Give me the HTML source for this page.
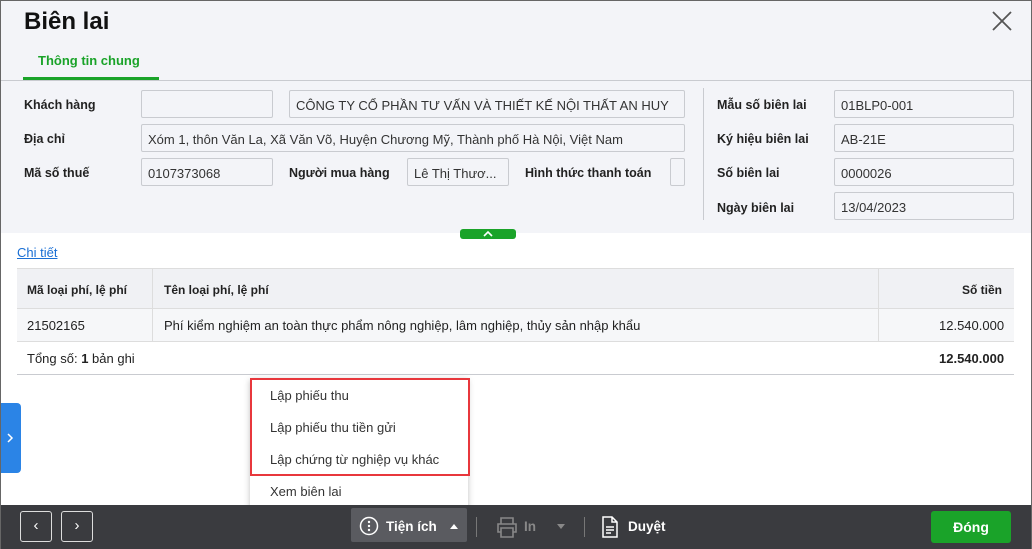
<!DOCTYPE html>
<html><head><meta charset="utf-8"><style>
*{box-sizing:border-box;margin:0;padding:0}
body{width:1032px;height:549px;overflow:hidden;font-family:"Liberation Sans","DejaVu Sans",sans-serif;font-size:13px;color:#222;background:#fff;position:relative}
.frame{position:absolute;inset:0;border:1px solid #666;border-bottom:none}
.top{position:absolute;left:1px;top:1px;right:1px;height:232px;background:#f3f4f8}
.a{position:absolute}
.lbl{position:absolute;font-weight:bold;font-size:12.5px;color:#222}
.inp{position:absolute;height:28px;border:1px solid #c9cbd0;border-radius:2px;background:#f3f4f8;font-size:13px;color:#333;padding:7px 6px;white-space:nowrap;overflow:hidden}
.foot{position:absolute;left:0;top:505px;width:1032px;height:44px;background:#3a3b3f}
.nb{position:absolute;top:6px;width:32px;height:31px;border:1px solid #ddd;border-radius:3px;color:#fff;text-align:center;line-height:28px;font-size:15px}
.mi{position:absolute;left:270px;font-size:13px;color:#333}
</style></head><body>
<div class="top"></div>
<div class="a" style="left:24px;top:8px;font-size:24px;font-weight:bold;color:#111">Biên lai</div>
<svg class="a" style="left:991px;top:10px" width="22" height="22"><path d="M2 2L20 20M20 2L2 20" stroke="#555" stroke-width="1.8"/></svg>
<div class="a" style="left:38px;top:53px;font-size:13px;font-weight:bold;color:#1aa329">Thông tin chung</div>
<div class="a" style="left:23px;top:77px;width:136px;height:3px;background:#1aa329"></div>
<div class="a" style="left:1px;top:80px;width:1030px;height:1px;background:#c9cbd0"></div>

<div class="lbl" style="left:24px;top:98px">Khách hàng</div>
<div class="inp" style="left:141px;top:90px;width:132px"></div>
<div class="inp" style="left:289px;top:90px;width:396px">CÔNG TY CỔ PHẦN TƯ VẤN VÀ THIẾT KẾ NỘI THẤT AN HUY</div>
<div class="lbl" style="left:24px;top:132px">Địa chỉ</div>
<div class="inp" style="left:141px;top:124px;width:544px">Xóm 1, thôn Văn La, Xã Văn Võ, Huyện Chương Mỹ, Thành phố Hà Nội, Việt Nam</div>
<div class="lbl" style="left:24px;top:166px">Mã số thuế</div>
<div class="inp" style="left:141px;top:158px;width:132px">0107373068</div>
<div class="lbl" style="left:289px;top:166px">Người mua hàng</div>
<div class="inp" style="left:407px;top:158px;width:102px">Lê Thị Thươ...</div>
<div class="lbl" style="left:525px;top:166px">Hình thức thanh toán</div>
<div class="inp" style="left:670px;top:158px;width:15px"></div>
<div class="a" style="left:703px;top:88px;width:1px;height:132px;background:#c9cbd0"></div>
<div class="lbl" style="left:717px;top:98px">Mẫu số biên lai</div>
<div class="inp" style="left:834px;top:90px;width:180px">01BLP0-001</div>
<div class="lbl" style="left:717px;top:132px">Ký hiệu biên lai</div>
<div class="inp" style="left:834px;top:124px;width:180px">AB-21E</div>
<div class="lbl" style="left:717px;top:166px">Số biên lai</div>
<div class="inp" style="left:834px;top:158px;width:180px">0000026</div>
<div class="lbl" style="left:717px;top:201px">Ngày biên lai</div>
<div class="inp" style="left:834px;top:192px;width:180px">13/04/2023</div>
<div class="a" style="left:460px;top:229px;width:56px;height:10px;background:#1aa329;border-radius:3px"><svg style="position:absolute;left:22px;top:1px" width="12" height="7"><path d="M2 6L6 2L10 6" stroke="#fff" stroke-width="1.6" fill="none"/></svg></div>

<div class="a" style="left:17px;top:245px;color:#1a6fd4;text-decoration:underline;font-size:13px">Chi tiết</div>
<div class="a" style="left:17px;top:268px;width:997px;height:40px;background:#f0f1f4;border-top:1px solid #ddd"></div>
<div class="a" style="left:17px;top:308px;width:997px;height:34px;background:#f6f7f9;border-top:1px solid #ddd;border-bottom:1px solid #ddd"></div>
<div class="a" style="left:152px;top:268px;width:1px;height:74px;background:#ddd"></div>
<div class="a" style="left:878px;top:268px;width:1px;height:74px;background:#ddd"></div>
<div class="a" style="left:17px;top:374px;width:997px;height:1px;background:#c9cbd0"></div>
<div class="lbl" style="left:27px;top:283px;font-size:12px">Mã loại phí, lệ phí</div>
<div class="lbl" style="left:164px;top:283px;font-size:12px">Tên loại phí, lệ phí</div>
<div class="lbl" style="left:962px;top:283px;font-size:12px">Số tiền</div>
<div class="a" style="left:27px;top:318px">21502165</div>
<div class="a" style="left:164px;top:318px">Phí kiểm nghiệm an toàn thực phẩm nông nghiệp, lâm nghiệp, thủy sản nhập khẩu</div>
<div class="a" style="left:939px;top:318px">12.540.000</div>
<div class="a" style="left:27px;top:351px">Tổng số: <b>1</b> bản ghi</div>
<div class="a" style="left:939px;top:351px;font-weight:bold">12.540.000</div>

<div class="a" style="left:0;top:403px;width:21px;height:70px;background:#2b84e6;border-radius:0 4px 4px 0"><svg style="position:absolute;left:6px;top:30px" width="8" height="10"><path d="M2 1L6 5L2 9" stroke="#fff" stroke-width="1.5" fill="none"/></svg></div>

<div class="a" style="left:250px;top:378px;width:218px;height:132px;background:#fff;box-shadow:0 2px 6px rgba(0,0,0,.25)"></div>
<div class="a" style="left:250px;top:378px;width:220px;height:98px;border:2px solid #e8373c"></div>
<div class="mi" style="top:388px">Lập phiếu thu</div>
<div class="mi" style="top:420px">Lập phiếu thu tiền gửi</div>
<div class="mi" style="top:452px">Lập chứng từ nghiệp vụ khác</div>
<div class="mi" style="top:484px">Xem biên lai</div>

<div class="foot">
<div class="nb" style="left:20px">‹</div>
<div class="nb" style="left:61px">›</div>
<div class="a" style="left:351px;top:3px;width:116px;height:34px;background:#5a5b60;border-radius:2px"></div>
<svg class="a" style="left:359px;top:11px" width="20" height="20"><circle cx="10" cy="10" r="8.5" stroke="#fff" stroke-width="1.5" fill="none"/><circle cx="10" cy="6" r="1.2" fill="#fff"/><circle cx="10" cy="10" r="1.2" fill="#fff"/><circle cx="10" cy="14" r="1.2" fill="#fff"/></svg>
<div class="a" style="left:386px;top:14px;color:#fff;font-weight:bold;font-size:13.5px">Tiện ích</div>
<svg class="a" style="left:449px;top:18px" width="10" height="7"><path d="M1 6L5 1L9 6Z" fill="#fff"/></svg>
<div class="a" style="left:476px;top:12px;width:1px;height:20px;background:#777"></div>
<svg class="a" style="left:496px;top:11px" width="22" height="22"><path d="M5 8V2h12v6M5 16H2V8h18v8h-3M5 12h12v9H5z" stroke="#888" stroke-width="1.6" fill="none"/></svg>
<div class="a" style="left:524px;top:14px;color:#888;font-weight:bold;font-size:13.5px">In</div>
<svg class="a" style="left:556px;top:18px" width="10" height="7"><path d="M1 1L5 6L9 1Z" fill="#888"/></svg>
<div class="a" style="left:584px;top:12px;width:1px;height:20px;background:#777"></div>
<svg class="a" style="left:601px;top:11px" width="18" height="22"><path d="M2 1h9l5 5v15H2z M11 1v5h5 M5 11h8M5 14h8M5 17h5" stroke="#fff" stroke-width="1.5" fill="none"/></svg>
<div class="a" style="left:628px;top:14px;color:#fff;font-weight:bold;font-size:13.5px">Duyệt</div>
<div class="a" style="left:931px;top:6px;width:80px;height:32px;background:#1aa329;border-radius:3px;color:#fff;font-weight:bold;text-align:center;line-height:32px;font-size:14px">Đóng</div>
</div>
<div class="frame"></div>
</body></html>
